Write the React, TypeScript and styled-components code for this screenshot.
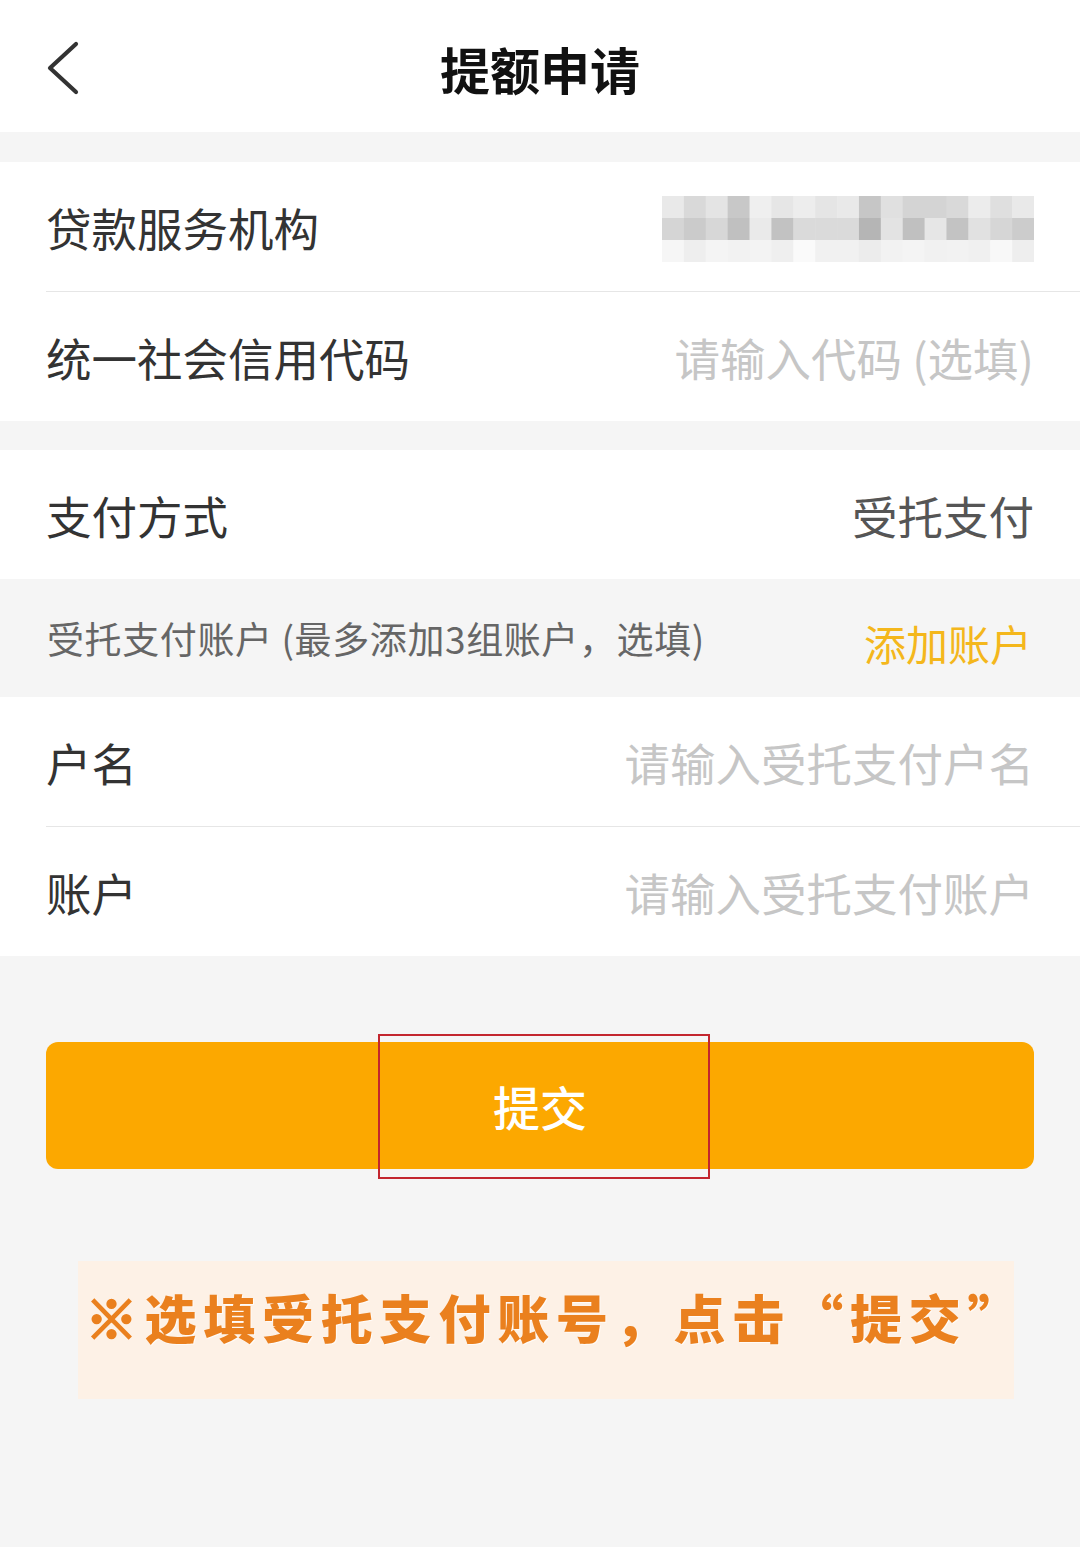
import styled, { createGlobalStyle } from "styled-components"

const GlobalStyle = createGlobalStyle`
    html, body {
        margin: 0;
        padding: 0;
        background: #f5f5f5;
    }
    * {
        box-sizing: border-box;
    }
    body {
        font-family: "Noto Sans CJK SC", "Noto Sans", sans-serif;
    }
`

const Page = styled.div`
    width: 1080px;
    min-height: 1547px;
    background: #f5f5f5;
    display: flex;
    flex-direction: column;
`

const Header = styled.header`
    height: 132px;
    background: #ffffff;
    display: grid;
    grid-template-columns: 1fr auto 1fr;
    align-items: center;
    padding-top: 4px;
`

const BackButton = styled.button`
    width: 36px;
    height: 54px;
    margin-left: 45px;
    padding: 0;
    border: none;
    background: transparent;
    display: flex;
    align-items: center;
    cursor: pointer;
`

const Title = styled.h1`
    margin: 0;
    font-size: 50px;
    font-weight: 700;
    color: #111111;
`

const Section = styled.section<{ $gap?: number }>`
    margin-top: ${(p) => p.$gap ?? 0}px;
    background: #ffffff;
    padding-left: 46px;
`

const Row = styled.div`
    height: 129px;
    padding-right: 46px;
    display: flex;
    align-items: center;
    justify-content: space-between;

    & + & {
        border-top: 1px solid #e6e6e6;
        height: 130px;
    }
`

const Label = styled.span`
    font-size: 45.5px;
    color: #333333;
`

const Value = styled.span<{ $placeholder?: boolean }>`
    font-size: 45.5px;
    color: ${(p) => (p.$placeholder ? "#c6c6c6" : "#555555")};
`

const HintRow = styled.div`
    height: 118px;
    padding: 0 48px 0 47px;
    display: flex;
    align-items: center;
    justify-content: space-between;
`

const HintText = styled.span`
    font-size: 37px;
    letter-spacing: 0.6px;
    color: #666666;
`

const AddLink = styled.span`
    font-size: 42px;
    color: #f4b71c;
    padding-top: 8px;
`

const ButtonWrap = styled.div`
    position: relative;
    margin: 86px 46px 0;
`

const SubmitButton = styled.button`
    width: 100%;
    height: 127px;
    border: none;
    border-radius: 12px;
    background: #fca800;
    color: #ffffff;
    font-family: inherit;
    font-size: 47px;
    font-weight: 500;
    cursor: pointer;
`

const Highlight = styled.div`
    position: absolute;
    left: 332px;
    top: -8px;
    width: 332px;
    height: 145px;
    border: 2.5px solid #c3262e;
    pointer-events: none;
`

const Note = styled.div`
    margin: 92px 66px 0 78px;
    height: 138px;
    background: #fdf1e6;
    display: flex;
    justify-content: center;
    padding: 30px 0 0 20px;
`

const NoteText = styled.p`
    margin: 0;
    font-size: 52px;
    line-height: 1;
    font-weight: 900;
    letter-spacing: 6.8px;
    white-space: nowrap;
    color: #ea801e;
    text-shadow: 1px 1px 0 rgba(255, 255, 255, 0.7);
`

const Mark = styled.span`
    -webkit-text-stroke: 2.5px #ea801e;
`

const mosaic = [
    [0xe9, 0xd9, 0xe4, 0xc8, 0xef, 0xe6, 0xed, 0xe5, 0xe9, 0xc6, 0xe0, 0xd4, 0xd4, 0xd9, 0xec, 0xdf, 0xe9],
    [0xd5, 0xcb, 0xd7, 0xc0, 0xea, 0xc2, 0xda, 0xda, 0xda, 0xb5, 0xe3, 0xc0, 0xe6, 0xc3, 0xe1, 0xd6, 0xcc],
    [0xf6, 0xee, 0xf4, 0xf2, 0xf3, 0xef, 0xfa, 0xf1, 0xf1, 0xec, 0xf2, 0xf4, 0xf1, 0xf2, 0xf0, 0xf8, 0xee],
]

const BlurredName = () => {
    const cw = 372 / 17
    return (
        <svg width="372" height="66" viewBox="0 0 372 66" style={{ marginTop: 4 }}>
            {mosaic.map((row, r) =>
                row.map((v, c) => (
                    <rect
                        key={`${r}-${c}`}
                        x={c * cw}
                        y={r * 22}
                        width={cw + 0.5}
                        height={22.5}
                        fill={`rgb(${v},${v},${v})`}
                    />
                ))
            )}
        </svg>
    )
}

export default function App() {
    return (
        <Page>
            <GlobalStyle />
            <Header>
                <BackButton aria-label="返回">
                    <svg width="36" height="54" viewBox="0 0 36 54">
                        <path d="M31 3 L5 27 L31 51" fill="none" stroke="#333333" strokeWidth="4.2" strokeLinecap="round" strokeLinejoin="round" />
                    </svg>
                </BackButton>
                <Title>提额申请</Title>
                <span />
            </Header>

            <Section $gap={30}>
                <Row>
                    <Label>贷款服务机构</Label>
                    <BlurredName />
                </Row>
                <Row>
                    <Label>统一社会信用代码</Label>
                    <Value $placeholder>请输入代码 (选填)</Value>
                </Row>
            </Section>

            <Section $gap={29}>
                <Row>
                    <Label>支付方式</Label>
                    <Value>受托支付</Value>
                </Row>
            </Section>

            <HintRow>
                <HintText>受托支付账户 (最多添加3组账户，选填)</HintText>
                <AddLink>添加账户</AddLink>
            </HintRow>

            <Section>
                <Row>
                    <Label>户名</Label>
                    <Value $placeholder>请输入受托支付户名</Value>
                </Row>
                <Row>
                    <Label>账户</Label>
                    <Value $placeholder>请输入受托支付账户</Value>
                </Row>
            </Section>

            <ButtonWrap>
                <SubmitButton type="button">提交</SubmitButton>
                <Highlight />
            </ButtonWrap>

            <Note>
                <NoteText><Mark>※</Mark>选填受托支付账号，点击“提交”</NoteText>
            </Note>
        </Page>
    )
}
